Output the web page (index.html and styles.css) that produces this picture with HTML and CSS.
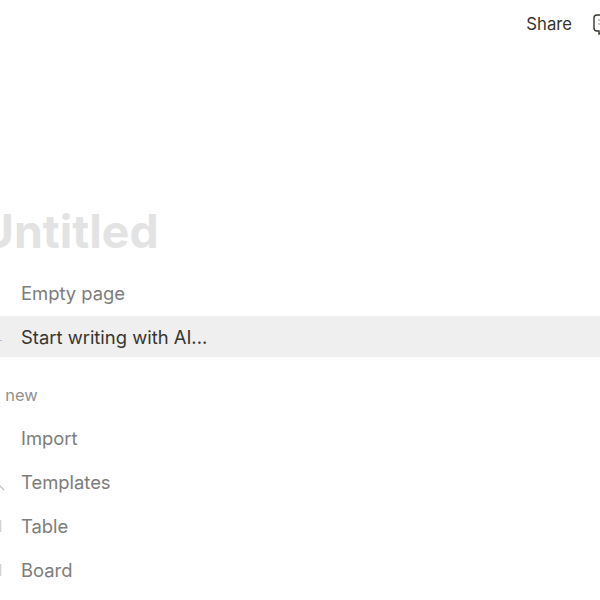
FILE: index.html
```html
<!DOCTYPE html>
<html lang="en">
<head>
    <meta charset="UTF-8">
    <title>Untitled</title>
    <link rel="stylesheet" href="styles.css">
</head>
<body>
    <div class="topbar">
        <span class="share">Share</span>
        <svg class="comment" width="22" height="22" viewBox="0 0 22 22" fill="none" stroke="#37352f" stroke-width="1.4">
            <path d="M5 2h12a3 3 0 0 1 3 3v10a3 3 0 0 1-3 3h-6l-4 3v-3H5a3 3 0 0 1-3-3V5a3 3 0 0 1 3-3z"/>
            <path d="M6 7h10M6 11h10" stroke="#b5b4b0"/>
        </svg>
    </div>

    <div class="page">
        <h1 class="title">Untitled</h1>

        <div class="row">
            <svg class="icon" width="20" height="20" viewBox="0 0 20 20" fill="none" stroke="#e3e3e1" stroke-width="1.4"><path d="M4 2h9l4 4v12H4z"/></svg>
            <span>Empty page</span>
        </div>
        <div class="row active">
            <svg class="icon" width="20" height="20" viewBox="0 0 20 20" fill="#a78bd8"><path d="M15 11l1 2 6 .6-6 .8-1 2-1-2-6-.8 6-.6z"/></svg>
            <span>Start writing with AI...</span>
        </div>

        <div class="label">Add new</div>

        <div class="row">
            <svg class="icon" width="20" height="20" viewBox="0 0 20 20"></svg>
            <span>Import</span>
        </div>
        <div class="row">
            <svg class="icon" width="20" height="20" viewBox="0 0 20 20" fill="none" stroke="#c4c4c2" stroke-width="1.4"><path d="M17 12l6 6"/></svg>
            <span>Templates</span>
        </div>
        <div class="row">
            <svg class="icon" width="20" height="20" viewBox="0 0 20 20" fill="none" stroke="#d4d4d2" stroke-width="1.6"><path d="M19.5 4v12"/></svg>
            <span>Table</span>
        </div>
        <div class="row">
            <svg class="icon" width="20" height="20" viewBox="0 0 20 20" fill="none" stroke="#d4d4d2" stroke-width="1.6"><path d="M19.5 4v12"/></svg>
            <span>Board</span>
        </div>
    </div>
</body>
</html>
```

FILE: styles.css
```css
html, body {
    height: 600px;
    overflow: hidden;
}
body {
    margin: 0;
    background-color: #fff;
    font-family: Inter, 'Liberation Sans', sans-serif;
    color: #37352f;
}
.topbar {
    height: 48px;
    display: flex;
    align-items: center;
    justify-content: flex-end;
    gap: 20px;
    margin-right: -14px;
}
.share {
    font-size: 16.7px;
}
.comment {
    flex-shrink: 0;
}
.page {
    margin-left: -19px;
    margin-top: 151px;
}
.title {
    margin: 0 0 9px -1px;
    font-size: 46.3px;
    line-height: 64px;
    font-weight: 700;
    color: #e3e3e3;
}
.row {
    height: 41px;
    margin-bottom: 3px;
    display: flex;
    align-items: center;
    gap: 20px;
    font-size: 18.4px;
    color: #7d7d7b;
}
.active {
    background-color: #efefef;
    color: #37352f;
}
.icon {
    flex-shrink: 0;
    overflow: visible;
}
.label {
    margin: 17px 0 0 -12px;
    height: 43px;
    line-height: 43px;
    font-size: 16.5px;
    color: #91918f;
}
```
